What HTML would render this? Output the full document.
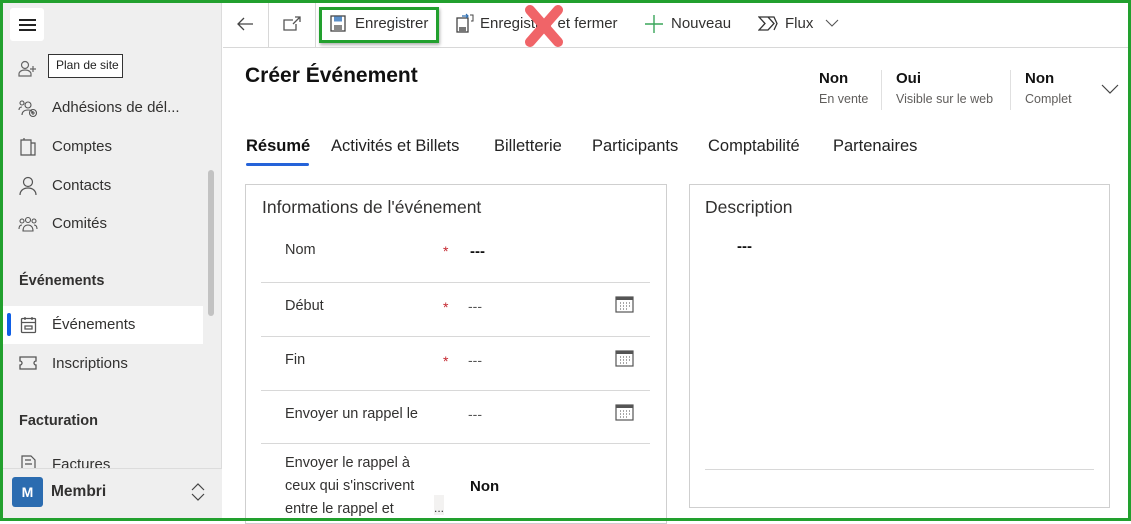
<!DOCTYPE html>
<html><head><meta charset="utf-8"><style>
*{margin:0;padding:0;box-sizing:border-box}
body{width:1131px;height:521px;overflow:hidden;font-family:"Segoe UI","Liberation Sans",sans-serif;background:#fff;position:relative;color:#323130}
.a{position:absolute;white-space:nowrap}
.frame{position:absolute;left:0;top:0;width:1131px;height:521px;border:3px solid #22a02e;z-index:50;pointer-events:none}
.side{position:absolute;left:0;top:0;width:222px;height:521px;background:#efefef;border-right:1px solid #dcdcdc}
.ni{font-size:15px;color:#323130}
.hr{position:absolute;height:1px;background:#d8d8d8}
.lbl{font-size:14.5px;color:#323130}
.star{color:#c4262e;font-size:14px}
</style></head><body>
<div class="side"></div>
<div class="a" style="left:10px;top:8px;width:34px;height:33px;background:#fff;border-radius:3px"></div>
<div class="a" style="left:19px;top:19px;width:17px;height:1.5px;background:#222"></div>
<div class="a" style="left:19px;top:24px;width:17px;height:1.5px;background:#222"></div>
<div class="a" style="left:19px;top:29px;width:17px;height:1.5px;background:#222"></div>
<svg class="a" style="left:18px;top:60px" width="20" height="18" viewBox="0 0 20 18" fill="none" stroke="#666" stroke-width="1.2"><circle cx="7" cy="5" r="3.5"/><path d="M1 16v-2c0-2 2-4 6-4s6 2 6 4v2z"/><path d="M15 6v6M12 9h6"/></svg>
<div class="a" style="left:48px;top:54px;width:75px;height:24px;border:1px solid #333;background:#fff;font-size:12px;padding:3px 0 0 7px;color:#222">Plan de site</div>
<svg class="a" style="left:18px;top:100px" width="20" height="18" viewBox="0 0 20 18" fill="none" stroke="#555" stroke-width="1.1"><circle cx="4" cy="3" r="2"/><circle cx="10" cy="5" r="3"/><path d="M4 15c0-3 2-5 6-5s4 1 4 3M1 10c0-2 1-3 3-3"/><circle cx="15" cy="13" r="3.5"/><path d="M15 11v4M13 13h4"/></svg>
<div class="a ni" style="left:52px;top:99px">Adhésions de dél...</div>
<svg class="a" style="left:19px;top:137px" width="18" height="20" viewBox="0 0 18 20" fill="none" stroke="#555" stroke-width="1.2"><path d="M2 3h10v15H2zM12 6h4v12h-4M5 3V1"/></svg>
<div class="a ni" style="left:52px;top:138px">Comptes</div>
<svg class="a" style="left:19px;top:176px" width="18" height="20" viewBox="0 0 18 20" fill="none" stroke="#555" stroke-width="1.2"><circle cx="9" cy="6" r="4.5"/><path d="M1 19c0-4 3-7 8-7s8 3 8 7"/></svg>
<div class="a ni" style="left:52px;top:177px">Contacts</div>
<svg class="a" style="left:18px;top:216px" width="20" height="18" viewBox="0 0 20 18" fill="none" stroke="#555" stroke-width="1.1"><circle cx="4" cy="5" r="2"/><circle cx="10" cy="4" r="2.5"/><circle cx="16" cy="5" r="2"/><path d="M1 13c0-3 1-4 3-4M19 13c0-3-1-4-3-4M5 15c0-4 2-6 5-6s5 2 5 6z"/></svg>
<div class="a ni" style="left:52px;top:215px">Comités</div>
<div class="a" style="left:208px;top:170px;width:6px;height:146px;background:#c2c2c2;border-radius:3px"></div>
<div class="a" style="left:19px;top:273px;font-size:14.5px;font-weight:600;color:#323130">Événements</div>
<div class="a" style="left:3px;top:306px;width:200px;height:38px;background:#fff"></div>
<div class="a" style="left:7px;top:313px;width:4px;height:23px;background:#0f5fe6;border-radius:2px"></div>
<svg class="a" style="left:20px;top:316px" width="17" height="18" viewBox="0 0 17 18" fill="none" stroke="#555" stroke-width="1.3"><rect x="1.5" y="2.5" width="14" height="14" rx="1"/><path d="M1.5 6.5h14M5 1v3M12 1v3M5 10h7v3H5z"/></svg>
<div class="a ni" style="left:52px;top:316px">Événements</div>
<svg class="a" style="left:19px;top:356px" width="18" height="14" viewBox="0 0 18 14" fill="none" stroke="#555" stroke-width="1.3"><path d="M1 1h16v4a2 2 0 0 0 0 4v4H1V9a2 2 0 0 0 0-4z"/></svg>
<div class="a ni" style="left:52px;top:355px">Inscriptions</div>
<div class="a" style="left:19px;top:413px;font-size:14.5px;font-weight:600;color:#323130">Facturation</div>
<svg class="a" style="left:21px;top:455px" width="15" height="13" viewBox="0 0 15 13" fill="none" stroke="#555" stroke-width="1.2"><path d="M1 13V1h9l4 4v8M4 5h6M4 9h7"/></svg>
<div class="a ni" style="left:52px;top:456px;height:12px;overflow:hidden">Factures</div>
<div class="a" style="left:3px;top:468px;width:219px;height:50px;background:#efefef;border-top:1px solid #dcdcdc"></div>
<div class="a" style="left:12px;top:477px;width:31px;height:30px;background:#2b6cb0;border-radius:3px;color:#fff;font-weight:700;font-size:14px;text-align:center;line-height:30px">M</div>
<div class="a" style="left:51px;top:483px;font-size:15.5px;font-weight:600;color:#323130">Membri</div>
<svg class="a" style="left:190px;top:482px" width="16" height="20" viewBox="0 0 16 20" fill="none" stroke="#444" stroke-width="1.2"><path d="M2 8l6-6 6 6M2 12l6 6 6-6"/></svg>

<!-- toolbar -->
<div class="hr" style="left:223px;top:47px;width:908px"></div>
<div class="a" style="left:268px;top:3px;width:1px;height:44px;background:#d8d8d8"></div>
<div class="a" style="left:315px;top:3px;width:1px;height:44px;background:#d8d8d8"></div>
<svg class="a" style="left:236px;top:16px" width="18" height="16" viewBox="0 0 18 16" fill="none" stroke="#444" stroke-width="1.3"><path d="M17 8H2M8 2L2 8l6 6"/></svg>
<svg class="a" style="left:283px;top:16px" width="18" height="16" viewBox="0 0 18 16" fill="none" stroke="#555" stroke-width="1.3"><path d="M10 4H1v10h12V8M12 1h5v5M17 1l-7 7"/></svg>
<div class="a" style="left:319px;top:7px;width:120px;height:36px;border:3px solid #22a02e;box-shadow:1px 2px 3px rgba(0,0,0,.3)"></div>
<svg class="a" style="left:330px;top:15px" width="16" height="17" viewBox="0 0 16 17"><rect x="1" y="1" width="14" height="15" fill="#fff" stroke="#444" stroke-width="1.3"/><rect x="4" y="1.5" width="8" height="5" fill="#5b8fc8"/><rect x="4" y="10" width="8" height="6" fill="#888"/></svg>
<div class="a" style="left:355px;top:15px;font-size:15px;color:#323130">Enregistrer</div>
<svg class="a" style="left:456px;top:13px" width="18" height="20" viewBox="0 0 18 20"><rect x="1" y="5" width="11" height="14" fill="#fff" stroke="#444" stroke-width="1.3"/><rect x="3" y="14" width="7" height="5" fill="#777"/><path d="M6 3h6M10 1l2 2-2 2" stroke="#2b6cb0" fill="none" stroke-width="1.2"/><path d="M14 2h3v6h-2" stroke="#444" fill="none"/></svg>
<div class="a" style="left:480px;top:15px;font-size:15px;color:#323130">Enregistrer et fermer</div>
<svg class="a" style="left:523px;top:4px" width="42" height="44" viewBox="0 0 42 44"><path d="M7 6L35 38M35 6L7 38" stroke="#f06468" stroke-width="10" stroke-linecap="round"/></svg>
<svg class="a" style="left:645px;top:15px" width="18" height="18" viewBox="0 0 18 18" stroke="#3aa55a" stroke-width="1.4"><path d="M9 0v18M0 9h18"/></svg>
<div class="a" style="left:671px;top:15px;font-size:15px;color:#323130">Nouveau</div>
<svg class="a" style="left:758px;top:15px" width="20" height="17" viewBox="0 0 20 17" fill="none" stroke="#333" stroke-width="1.3"><path d="M1 2h9l6 6.5-6 6.5H1l6-6.5zM10 2l6 0 3 6.5-3 6.5"/></svg>
<div class="a" style="left:785px;top:15px;font-size:15px;color:#323130">Flux</div>
<svg class="a" style="left:825px;top:19px" width="14" height="8" viewBox="0 0 14 8" fill="none" stroke="#555" stroke-width="1.1"><path d="M1 1l6 6 6-6"/></svg>

<!-- header -->
<div class="a" style="left:245px;top:64px;font-size:21px;font-weight:600;color:#111">Créer Événement</div>
<div class="a" style="left:819px;top:70px;font-size:15px;font-weight:600;color:#111">Non</div>
<div class="a" style="left:819px;top:92px;font-size:12.5px;color:#605e5c">En vente</div>
<div class="a" style="left:881px;top:70px;width:1px;height:40px;background:#e0e0e0"></div>
<div class="a" style="left:896px;top:70px;font-size:15px;font-weight:600;color:#111">Oui</div>
<div class="a" style="left:896px;top:92px;font-size:12.5px;color:#605e5c">Visible sur le web</div>
<div class="a" style="left:1010px;top:70px;width:1px;height:40px;background:#e0e0e0"></div>
<div class="a" style="left:1025px;top:70px;font-size:15px;font-weight:600;color:#111">Non</div>
<div class="a" style="left:1025px;top:92px;font-size:12.5px;color:#605e5c">Complet</div>
<svg class="a" style="left:1101px;top:84px" width="18" height="11" viewBox="0 0 18 11" fill="none" stroke="#444" stroke-width="1.2"><path d="M1 1l8 8 8-8"/></svg>

<!-- tabs -->
<div class="a" style="left:246px;top:137px;font-size:16.5px;font-weight:600;color:#111">Résumé</div>
<div class="a" style="left:246px;top:163px;width:63px;height:3px;background:#2563d9;border-radius:2px"></div>
<div class="a" style="left:331px;top:137px;font-size:16.5px;color:#222">Activités et Billets</div>
<div class="a" style="left:494px;top:137px;font-size:16.5px;color:#222">Billetterie</div>
<div class="a" style="left:592px;top:137px;font-size:16.5px;color:#222">Participants</div>
<div class="a" style="left:708px;top:137px;font-size:16.5px;color:#222">Comptabilité</div>
<div class="a" style="left:833px;top:137px;font-size:16.5px;color:#222">Partenaires</div>

<!-- left card -->
<div class="a" style="left:245px;top:184px;width:422px;height:340px;border:1px solid #cfcfcf"></div>
<div class="a" style="left:262px;top:197px;font-size:17.5px;color:#323130">Informations de l'événement</div>
<div class="a lbl" style="left:285px;top:242px">Nom</div>
<div class="a star" style="left:443px;top:243px">*</div>
<div class="a" style="left:470px;top:243px;font-size:15px;font-weight:700;color:#111">---</div>
<div class="hr" style="left:261px;top:282px;width:389px"></div>
<div class="a lbl" style="left:285px;top:298px">Début</div>
<div class="a star" style="left:443px;top:299px">*</div>
<div class="a" style="left:468px;top:298px;font-size:14px;color:#555">---</div>
<div class="hr" style="left:261px;top:336px;width:389px"></div>
<div class="a lbl" style="left:285px;top:352px">Fin</div>
<div class="a star" style="left:443px;top:353px">*</div>
<div class="a" style="left:468px;top:352px;font-size:14px;color:#555">---</div>
<div class="hr" style="left:261px;top:390px;width:389px"></div>
<div class="a lbl" style="left:285px;top:406px">Envoyer un rappel le</div>
<div class="a" style="left:468px;top:406px;font-size:14px;color:#555">---</div>
<div class="hr" style="left:261px;top:443px;width:389px"></div>
<div class="a lbl" style="left:285px;top:452px;line-height:23px">Envoyer le rappel à<br>ceux qui s'inscrivent<br>entre le rappel et</div>
<div class="a" style="left:434px;top:495px;width:10px;height:20px;background:#f3f2f1;font-size:12px;line-height:26px">...</div>
<div class="a" style="left:470px;top:478px;font-size:15px;font-weight:700;color:#111">Non</div>
<svg class="a" style="left:615px;top:295px" width="20" height="18" viewBox="0 0 20 18"><rect x="1" y="2" width="17" height="15" fill="none" stroke="#555" stroke-width="1.2"/><rect x="1" y="2" width="17" height="3" fill="#555"/><path d="M5 8h1M8 8h1M11 8h1M14 8h1M5 11h1M8 11h1M11 11h1M14 11h1M5 14h1M8 14h1M11 14h1" stroke="#888" stroke-width="1.5"/></svg>
<svg class="a" style="left:615px;top:349px" width="20" height="18" viewBox="0 0 20 18"><rect x="1" y="2" width="17" height="15" fill="none" stroke="#555" stroke-width="1.2"/><rect x="1" y="2" width="17" height="3" fill="#555"/><path d="M5 8h1M8 8h1M11 8h1M14 8h1M5 11h1M8 11h1M11 11h1M14 11h1M5 14h1M8 14h1M11 14h1" stroke="#888" stroke-width="1.5"/></svg>
<svg class="a" style="left:615px;top:403px" width="20" height="18" viewBox="0 0 20 18"><rect x="1" y="2" width="17" height="15" fill="none" stroke="#555" stroke-width="1.2"/><rect x="1" y="2" width="17" height="3" fill="#555"/><path d="M5 8h1M8 8h1M11 8h1M14 8h1M5 11h1M8 11h1M11 11h1M14 11h1M5 14h1M8 14h1M11 14h1" stroke="#888" stroke-width="1.5"/></svg>

<!-- right card -->
<div class="a" style="left:689px;top:184px;width:421px;height:324px;border:1px solid #cfcfcf"></div>
<div class="a" style="left:705px;top:197px;font-size:17.5px;color:#323130">Description</div>
<div class="a" style="left:737px;top:238px;font-size:15px;font-weight:700;color:#111">---</div>
<div class="hr" style="left:705px;top:469px;width:389px"></div>

<div class="frame"></div>
</body></html>
